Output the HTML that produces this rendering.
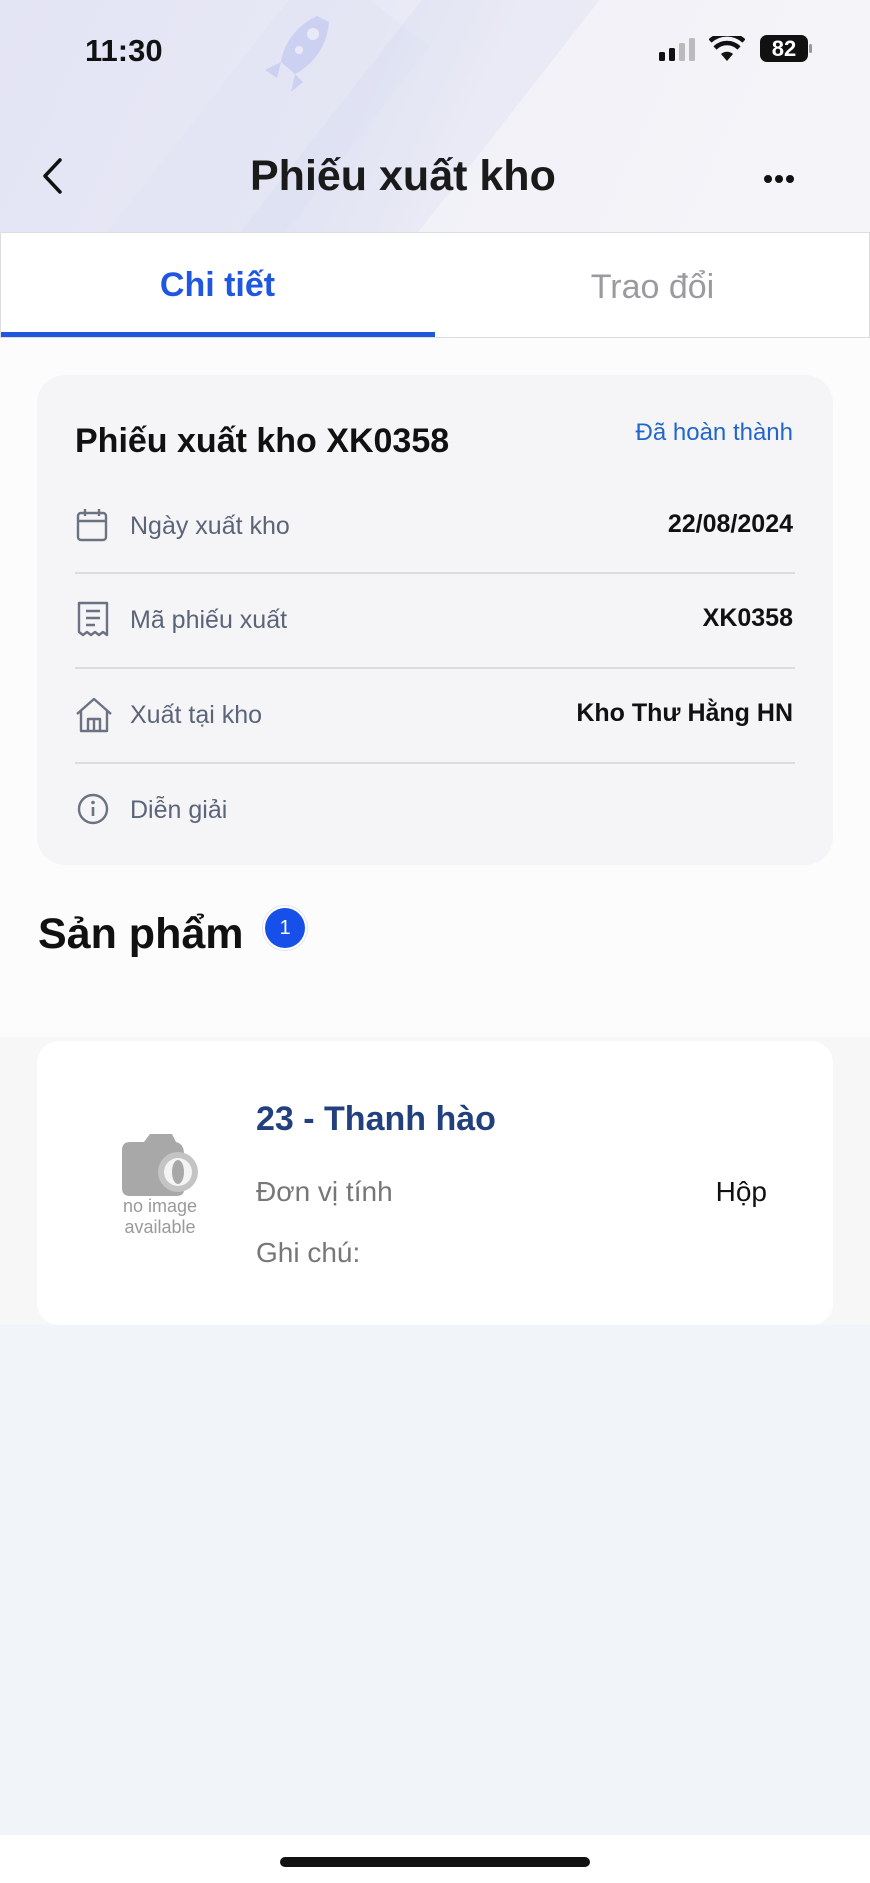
<!DOCTYPE html>
<html><head><meta charset="utf-8"><style>
*{margin:0;padding:0;box-sizing:border-box}
body{width:870px;height:1883px;position:relative;background:#f1f4f9;font-family:"Liberation Sans",sans-serif;overflow:hidden;color:#111}
.abs{position:absolute}
.hdr{left:0;top:0;width:870px;height:232px;background:linear-gradient(115deg,#e3e4f4 0%,#e8e9f6 40%,#f1f1f8 54%,#f5f5f9 100%);overflow:hidden}
.band{position:absolute;width:140px;height:600px;background:rgba(205,208,238,0.22);transform:rotate(38deg)}
.t{white-space:nowrap}
</style></head><body>
<div class="abs hdr">
  <div class="band" style="left:300px;top:-120px"></div>
  <div class="band" style="left:120px;top:-60px;background:rgba(215,218,242,0.2)"></div>
  <svg class="abs" style="left:255px;top:12px" width="80" height="90" viewBox="0 0 80 90"><path d="M62 4 C40 14 28 34 26 50 L40 62 C56 54 72 36 74 10 Z" fill="#cdd1f1"/><circle cx="58" cy="22" r="6" fill="#e9eaf8"/><circle cx="44" cy="38" r="4" fill="#e9eaf8"/><path d="M26 50 L10 58 L22 66 Z M40 62 L36 80 L48 70 Z" fill="#cdd1f1"/></svg>
</div>
<div class="abs t" style="left:85px;top:33px;font-size:31px;font-weight:bold;color:#111">11:30</div>
<svg class="abs" style="left:659px;top:38px" width="40" height="24"><rect x="0" y="14" width="6" height="9" rx="1.5" fill="#111"/><rect x="10" y="10" width="6" height="13" rx="1.5" fill="#111"/><rect x="20" y="5" width="6" height="18" rx="1.5" fill="#bbb"/><rect x="30" y="0" width="6" height="23" rx="1.5" fill="#bbb"/></svg>
<svg class="abs" style="left:709px;top:36px" width="36" height="26" viewBox="0 0 36 26"><path d="M18 25 L12 18 A9 9 0 0 1 24 18 Z" fill="#111"/><path d="M6 12 A17 17 0 0 1 30 12" stroke="#111" stroke-width="4.5" fill="none"/><path d="M1 6 A25 25 0 0 1 35 6" stroke="#111" stroke-width="4.5" fill="none" transform="translate(0,-1)"/></svg>
<div class="abs" style="left:760px;top:35px;width:48px;height:27px;background:#111;border-radius:7px;color:#fff;font-weight:bold;font-size:22px;line-height:27px;text-align:center">82</div>
<div class="abs" style="left:809px;top:44px;width:3px;height:9px;background:#999;border-radius:2px"></div>
<svg class="abs" style="left:40px;top:157px" width="24" height="38"><path d="M20 3 L5 19 L20 35" stroke="#111" stroke-width="3.5" fill="none" stroke-linecap="round" stroke-linejoin="round"/></svg>
<div class="abs t" style="left:250px;top:152px;font-size:43px;font-weight:bold;color:#1a1a1a">Phiếu xuất kho</div>
<div class="abs" style="left:764px;top:170px"><span style="display:inline-block;width:8px;height:8px;border-radius:50%;background:#111;margin-right:3px"></span><span style="display:inline-block;width:8px;height:8px;border-radius:50%;background:#111;margin-right:3px"></span><span style="display:inline-block;width:8px;height:8px;border-radius:50%;background:#111"></span></div>
<div class="abs" style="left:0;top:232px;width:870px;height:106px;background:#fff;border:1px solid #ddd"></div>
<div class="abs t" style="left:0;top:266px;width:435px;text-align:center;font-size:34px;font-weight:bold;color:#1f57e0">Chi tiết</div>
<div class="abs t" style="left:435px;top:268px;width:435px;text-align:center;font-size:34px;color:#9a9a9f">Trao đổi</div>
<div class="abs" style="left:1px;top:332px;width:434px;height:5px;background:#1f57e0"></div>
<div class="abs" style="left:0;top:338px;width:870px;height:699px;background:#fcfcfc"></div>
<div class="abs" style="left:37px;top:375px;width:796px;height:490px;background:#f5f5f7;border-radius:28px"></div>
<div class="abs t" style="left:75px;top:422px;font-size:34px;font-weight:bold">Phiếu xuất kho XK0358</div>
<div class="abs t" style="right:77px;top:419px;font-size:24px;color:#2366c9">Đã hoàn thành</div>
<svg class="abs" style="left:76px;top:508px" width="32" height="34"><rect x="2" y="5" width="28" height="27" rx="3" stroke="#6b7282" stroke-width="2.4" fill="none"/><path d="M2 13 H30 M9 1 V8 M23 1 V8" stroke="#6b7282" stroke-width="2.4"/></svg>
<div class="abs t" style="left:130px;top:512px;font-size:25px;color:#5b6478">Ngày xuất kho</div>
<div class="abs t" style="right:77px;top:510px;font-size:25px;font-weight:bold">22/08/2024</div>
<div class="abs" style="left:75px;top:572px;width:720px;height:2px;background:#dcdcde"></div>
<svg class="abs" style="left:77px;top:601px" width="32" height="38"><path d="M2 2 H30 V34 L26 31 L22 34 L18 31 L14 34 L10 31 L6 34 L2 31 Z" stroke="#6b7282" stroke-width="2.4" fill="none" stroke-linejoin="round"/><path d="M9 10 H23 M9 17 H23 M9 24 H18" stroke="#6b7282" stroke-width="2.4"/></svg>
<div class="abs t" style="left:130px;top:606px;font-size:25px;color:#5b6478">Mã phiếu xuất</div>
<div class="abs t" style="right:77px;top:604px;font-size:25px;font-weight:bold">XK0358</div>
<div class="abs" style="left:75px;top:667px;width:720px;height:2px;background:#dcdcde"></div>
<svg class="abs" style="left:75px;top:697px" width="38" height="36"><path d="M2 17 L19 2 L36 17 M6 14 V34 H32 V14 M13 34 V22 H25 V34 M19 22 V34" stroke="#6b7282" stroke-width="2.4" fill="none" stroke-linejoin="round"/></svg>
<div class="abs t" style="left:130px;top:701px;font-size:25px;color:#5b6478">Xuất tại kho</div>
<div class="abs t" style="right:77px;top:699px;font-size:25px;font-weight:bold">Kho Thư Hằng HN</div>
<div class="abs" style="left:75px;top:762px;width:720px;height:2px;background:#dcdcde"></div>
<svg class="abs" style="left:77px;top:793px" width="32" height="32"><circle cx="16" cy="16" r="14" stroke="#6b7282" stroke-width="2.4" fill="none"/><path d="M16 14 V23" stroke="#6b7282" stroke-width="2.6"/><circle cx="16" cy="9.5" r="1.8" fill="#6b7282"/></svg>
<div class="abs t" style="left:130px;top:796px;font-size:25px;color:#5b6478">Diễn giải</div>
<div class="abs t" style="left:38px;top:910px;font-size:43px;font-weight:bold">Sản phẩm</div>
<div class="abs" style="left:262px;top:905px;width:46px;height:46px;border-radius:50%;background:#fff;border:1px solid #e3e6ee"></div>
<div class="abs" style="left:265px;top:908px;width:40px;height:40px;border-radius:50%;background:#1650e8;color:#fff;font-size:20px;line-height:40px;text-align:center">1</div>
<div class="abs" style="left:0;top:1037px;width:870px;height:288px;background:#f7f7f8"></div>
<div class="abs" style="left:37px;top:1041px;width:796px;height:284px;background:#fff;border-radius:22px"></div>
<svg class="abs" style="left:118px;top:1132px" width="84" height="70" viewBox="0 0 84 70"><path d="M4 18 Q4 10 12 10 H26 L32 2 H54 L58 10 Q66 12 66 22 V58 Q66 64 58 64 H12 Q4 64 4 56 Z" fill="#a8a8a8"/><circle cx="60" cy="40" r="20" fill="#c4c4c4"/><circle cx="60" cy="40" r="14" fill="#f4f4f4"/><ellipse cx="60" cy="40" rx="6" ry="12" fill="#a8a8a8"/></svg>
<div class="abs t" style="left:100px;top:1196px;width:120px;text-align:center;font-size:18px;color:#9a9a9a;line-height:21px">no image<br>available</div>
<div class="abs t" style="left:256px;top:1100px;font-size:34px;font-weight:bold;color:#223f7e">23 - Thanh hào</div>
<div class="abs t" style="left:256px;top:1176px;font-size:28px;color:#777">Đơn vị tính</div>
<div class="abs t" style="right:103px;top:1176px;font-size:28px;color:#111">Hộp</div>
<div class="abs t" style="left:256px;top:1237px;font-size:28px;color:#777">Ghi chú:</div>
<div class="abs" style="left:0;top:1835px;width:870px;height:48px;background:#fff"></div>
<div class="abs" style="left:280px;top:1857px;width:310px;height:10px;border-radius:5px;background:#111"></div>
</body></html>
